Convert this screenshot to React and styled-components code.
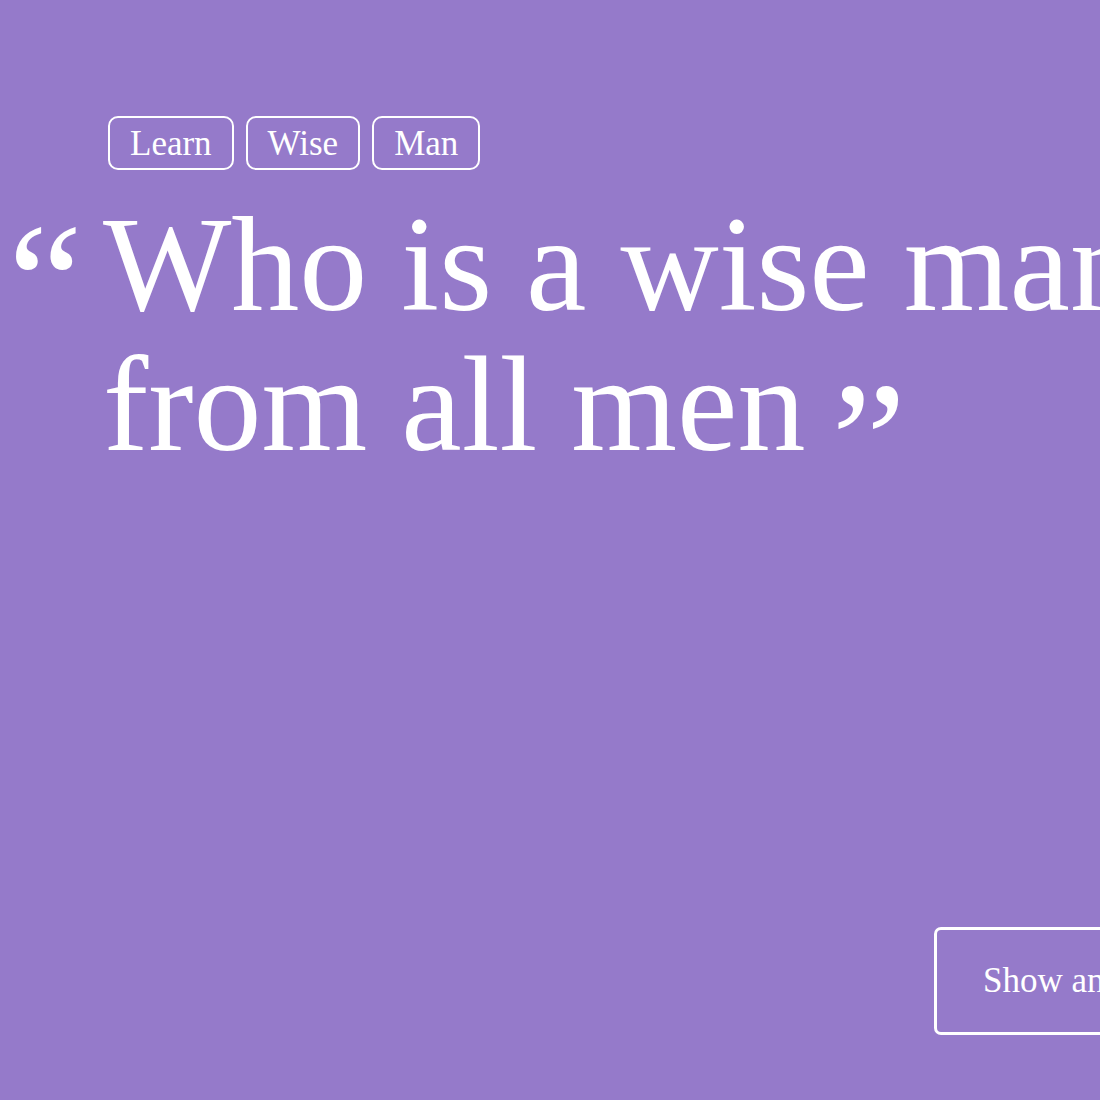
import React from "react";
import styled, { createGlobalStyle } from "styled-components";

const Global = createGlobalStyle`
  html, body { margin: 0; padding: 0; background: #957aca; overflow: hidden; }
  body { font-family: "Liberation Serif", "Times New Roman", serif; color: #fff; }
`;

const Page = styled.main`
  width: 2200px;
  height: 1100px;
  box-sizing: border-box;
  padding: 116px 0 0 108px;
  display: flex;
  flex-direction: column;
`;

const Tags = styled.ul`
  display: flex;
  gap: 12px;
  margin: 0;
  padding: 0;
  list-style: none;
`;

const Tag = styled.li`
  box-sizing: border-box;
  height: 54px;
  padding: 0 20px;
  display: flex;
  align-items: center;
  border: 2px solid #fff;
  border-radius: 10px;
  font-size: 35px;
  line-height: 1;
`;

const Quote = styled.blockquote`
  position: relative;
  margin: 24px 0 0 -5px;
  font-size: 136px;
  line-height: 140px;
  font-weight: 400;
  white-space: nowrap;
`;

const Mark = styled.span`
  font-size: 168px;
  line-height: 1;
  ${(p) =>
    p.$open
      ? `position: absolute; left: -95px; top: 4px;`
      : `display: inline-block; margin-left: 26px; vertical-align: -48px;`}
`;

const Footer = styled.div`
  margin-top: auto;
  margin-bottom: 65px;
  margin-left: 826px;
`;

const Button = styled.button`
  box-sizing: border-box;
  height: 108px;
  padding: 0 46px;
  background: transparent;
  border: 3px solid #fff;
  border-radius: 7px;
  color: #fff;
  font-family: inherit;
  font-size: 35px;
`;

export default function App() {
  return (
    <>
      <Global />
      <Page>
        <Tags>
          <Tag>Learn</Tag>
          <Tag>Wise</Tag>
          <Tag>Man</Tag>
        </Tags>
        <Quote>
          <Mark $open>“</Mark>
          Who is a wise man? He who learns
          <br />
          from all men
          <Mark>”</Mark>
        </Quote>
        <Footer>
          <Button>Show answer</Button>
        </Footer>
      </Page>
    </>
  );
}
